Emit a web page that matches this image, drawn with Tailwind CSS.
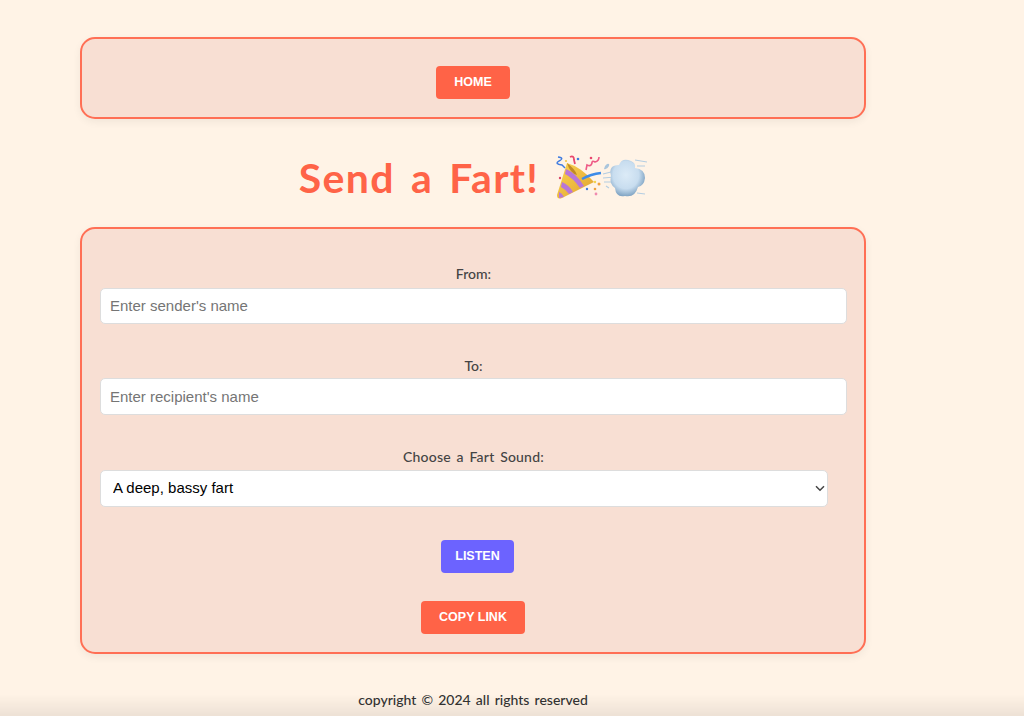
<!DOCTYPE html>
<html lang="en">
<head>
    <meta charset="UTF-8">
    <meta name="viewport" content="width=device-width, initial-scale=1.0">
    <title>Send a Fart!</title>
    <script src="https://cdn.jsdelivr.net/npm/@tailwindcss/browser@4"></script>
</head>
<body class="bg-[#fff3e6] min-h-screen font-['Lato',sans-serif] overflow-hidden">
    <div class="w-[786px] ml-[80px] pt-[37px]">
        <nav class="h-[82px] bg-[#f8dfd3] border-2 border-[#ff6f55] rounded-[15px] shadow-[0_3px_8px_rgba(0,0,0,0.06)] flex justify-center items-start pt-[27px]">
            <a class="w-[74px] h-[33px] bg-[#ff6347] rounded-[4px] text-white font-['Liberation_Sans',sans-serif] font-bold text-[12.5px] flex items-center justify-center">HOME</a>
        </nav>

        <div class="h-[108px] flex justify-center items-center gap-[14px] pt-[12px]">
            <h1 class="text-[#ff6347] text-[41px] font-bold leading-none tracking-[1.3px] [word-spacing:5px] pb-[3px]">Send a Fart!</h1>
            <svg class="w-[94px] h-[51px] mb-[6px]" viewBox="14 6 94 51">
                <defs>
                    <linearGradient id="gold" x1="0" y1="0" x2="1" y2="1">
                        <stop offset="0" stop-color="#fbd650"/>
                        <stop offset="1" stop-color="#e0a030"/>
                    </linearGradient>
                    <radialGradient id="cloud" cx="0.45" cy="0.42" r="0.62">
                        <stop offset="0" stop-color="#dcebf7"/>
                        <stop offset="0.6" stop-color="#c8ddef"/>
                        <stop offset="1" stop-color="#7399bb"/>
                    </radialGradient>
                </defs>
                <!-- party popper -->
                <path d="M28 18 Q42 22 55 37 L23 53 Q18 55 18 50 Z" fill="url(#gold)"/>
                <path d="M27 24 Q37 28 45 41 L41 43 Q34 33 26 29 Z" fill="#b877d8"/>
                <path d="M23 37 Q30 40 34 47 L30 49 Q26 44 22 42 Z" fill="#b877d8"/>
                <path d="M20 47 Q23 48 25 52 L20 53 Z" fill="#b877d8"/>
                <path d="M28 18 Q36 24 38 30 Q31 28 28 18 Z" fill="#c08a26"/>
                <path d="M43 34 Q52 29 62 28" fill="none" stroke="#3d8be8" stroke-width="2.4"/>
                <path d="M19 12 Q26 13 20 16 Q15 19 23 20 L26 23" fill="none" stroke="#3f7be0" stroke-width="1.4"/>
                <path d="M31 12 Q35 10 35 15 L36 19" fill="none" stroke="#e8476e" stroke-width="1.8"/>
                <path d="M47 25 L48 20 Q52 22 53 18 Q53 15 56 17 Q60 16 60 12" fill="none" stroke="#ee5a86" stroke-width="1.6"/>
                <circle cx="39" cy="14" r="1.3" fill="#3f7be0"/>
                <circle cx="52" cy="13" r="1.3" fill="#e8476e"/>
                <circle cx="27" cy="16" r="1.1" fill="#f3c74a"/>
                <circle cx="21" cy="33" r="1.2" fill="#d8476a"/>
                <circle cx="56" cy="37" r="1.2" fill="#f3d34a"/>
                <circle cx="60" cy="39" r="1.5" fill="#f0a040"/>
                <circle cx="48" cy="44" r="1.2" fill="#3f7be0"/>
                <circle cx="56" cy="44" r="1.3" fill="#f0a040"/>
                <circle cx="57" cy="49" r="1.4" fill="#f08ab0"/>
                <!-- dash -->
                <path d="M68 19 Q71 18 70 21 Q68 25 65 24 Q65 21 68 19 Z" fill="#a9c5dc"/>
                <path d="M64 29 L76 26 M64 33 L76 32 M65 37 L76 37 M67 41 L70 43 M96 15 L108 17 M98 21 L106 21 M98 48 L106 49" stroke="#b4cde2" stroke-width="1.2" fill="none"/>
                <path d="M72 31 Q69 20 80 20 Q83 12 92 16 Q97 18 96 23 Q106 24 106 33 Q105 41 99 42 Q96 53 86 51 Q77 53 76 43 Q70 39 72 31 Z" fill="url(#cloud)"/>
            </svg>
        </div>

        <form class="h-[427px] bg-[#f8dfd3] border-2 border-[#ff6f55] rounded-[15px] shadow-[0_3px_8px_rgba(0,0,0,0.06)] pt-[36px] pl-[18px] pr-[17px]">
            <label class="block text-center text-[#444] text-[14px] leading-[17px] h-[23px] font-medium">From:</label>
            <input type="text" placeholder="Enter sender's name" class="block w-[747px] h-[36px] bg-white border border-[#ddd] rounded-[5px] px-[9px] pb-[2px] text-[15px] font-['Liberation_Sans',sans-serif] placeholder:text-[#757575]">

            <label class="block text-center text-[#444] text-[14px] leading-[17px] h-[21px] mt-[33px] font-medium">To:</label>
            <input type="text" placeholder="Enter recipient's name" class="block w-[747px] h-[37px] bg-white border border-[#ddd] rounded-[5px] px-[9px] text-[15px] font-['Liberation_Sans',sans-serif] placeholder:text-[#757575]">

            <label class="block text-center text-[#444] text-[14px] leading-[17px] h-[22px] mt-[33px] font-medium tracking-[0.2px] [word-spacing:2px]">Choose a Fart Sound:</label>
            <div class="relative w-[728px]">
                <select class="block w-full h-[37px] appearance-none bg-white border border-[#ddd] rounded-[5px] pl-[12px] text-[15px] text-black font-['Liberation_Sans',sans-serif]">
                    <option>A deep, bassy fart</option>
                </select>
                <svg class="absolute right-[3px] top-[15px] w-[10px] h-[7px] pointer-events-none" viewBox="0 0 10 7">
                    <path d="M1 1.2 L5 5.2 L9 1.2" fill="none" stroke="#444" stroke-width="1.5"/>
                </svg>
            </div>

            <div class="flex justify-center pl-[8px] mt-[33px]">
                <button type="button" class="w-[73px] h-[33px] bg-[#6c63ff] rounded-[4px] text-white font-['Liberation_Sans',sans-serif] font-bold text-[12.5px]">LISTEN</button>
            </div>
            <div class="flex justify-center pr-[1px] mt-[28px]">
                <button type="button" class="w-[104px] h-[33px] bg-[#ff6347] rounded-[4px] text-white font-['Liberation_Sans',sans-serif] font-bold text-[12.5px]">COPY LINK</button>
            </div>
        </form>

        <footer class="text-center text-[#333] text-[14px] mt-[37px] leading-[18px] font-medium [word-spacing:1.6px]">copyright © 2024 all rights reserved</footer>
    </div>
    <div class="fixed left-0 right-0 bottom-0 h-[22px] bg-gradient-to-b from-black/0 to-black/[0.07] pointer-events-none"></div>
</body>
</html>
